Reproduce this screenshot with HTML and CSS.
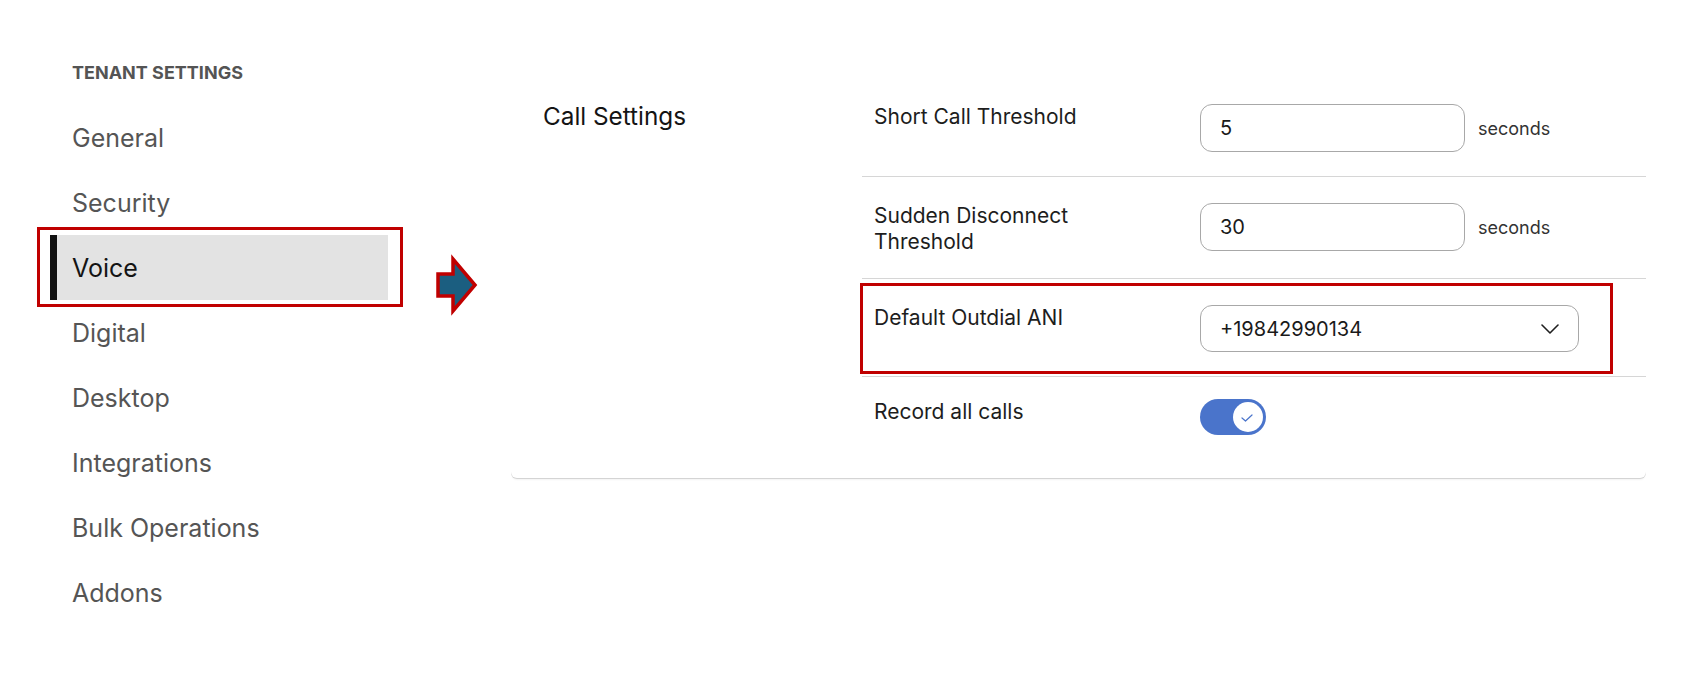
FILE: index.html
```html
<!DOCTYPE html>
<html lang="en">
<head>
<meta charset="utf-8">
<title>Tenant Settings - Voice</title>
<link rel="stylesheet" href="styles.css">
</head>
<body>
<div class="page">
  <nav class="nav">
    <div class="nav-title">TENANT SETTINGS</div>
    <ul class="nav-list">
      <li class="nav-item">General</li>
      <li class="nav-item">Security</li>
      <li class="nav-item is-active">Voice<span class="callout callout-nav"></span></li>
      <li class="nav-item">Digital</li>
      <li class="nav-item">Desktop</li>
      <li class="nav-item">Integrations</li>
      <li class="nav-item">Bulk Operations</li>
      <li class="nav-item">Addons</li>
    </ul>
  </nav>

  <div class="gutter">
    <svg class="pointer-arrow" width="46" height="62" viewBox="0 0 46 62" aria-hidden="true">
      <polygon points="4,20 19,20 19,5 41,31 19,57 19,42 4,42" fill="#1b5e80" stroke="#c00000" stroke-width="3.5" stroke-linejoin="miter"/>
    </svg>
  </div>

  <section class="card">
    <h2 class="card-title">Call Settings</h2>
    <div class="rows">
      <div class="row">
        <div class="row-label">Short Call Threshold</div>
        <div class="row-control">
          <div class="field">5</div>
          <span class="unit">seconds</span>
        </div>
      </div>
      <div class="row">
        <div class="row-label">Sudden Disconnect<br>Threshold</div>
        <div class="row-control">
          <div class="field">30</div>
          <span class="unit">seconds</span>
        </div>
      </div>
      <div class="row">
        <div class="row-label">Default Outdial ANI</div>
        <div class="row-control">
          <div class="field field-select">
            <span>+19842990134</span>
            <svg class="chevron" width="18" height="10" viewBox="0 0 18 10" aria-hidden="true">
              <path d="M1 1 L9 9 L17 1" fill="none" stroke="#1f1f1f" stroke-width="1.6" stroke-linecap="round" stroke-linejoin="round"/>
            </svg>
          </div>
        </div>
        <span class="callout callout-row"></span>
      </div>
      <div class="row row-last">
        <div class="row-label">Record all calls</div>
        <div class="row-control">
          <div class="toggle">
            <span class="toggle-knob">
              <svg width="12" height="8" viewBox="0 0 12 8" aria-hidden="true">
                <path d="M1 4 L4.5 7 L11 1" fill="none" stroke="#4a74cb" stroke-width="1.2" stroke-linecap="round" stroke-linejoin="round"/>
              </svg>
            </span>
          </div>
        </div>
      </div>
    </div>
  </section>
</div>
</body>
</html>
```

FILE: styles.css
```css
* { box-sizing: border-box; }

html, body {
  margin: 0;
  padding: 0;
  background: #ffffff;
}

body {
  font-family: Inter, "Noto Sans", "Liberation Sans", sans-serif;
  color: #1a1a1a;
}

.page {
  display: flex;
  align-items: flex-start;
  padding-left: 50px;
}

/* ---------- Left navigation ---------- */
.nav {
  width: 338px;
  flex: none;
  padding-top: 62px;
}

.nav-title {
  font-size: 18px;
  line-height: 22px;
  font-weight: 700;
  color: #545454;
  padding-left: 22px;
  margin-bottom: 21px;
}

.nav-list {
  list-style: none;
  margin: 0;
  padding: 0;
}

.nav-item {
  position: relative;
  height: 65px;
  display: flex;
  align-items: center;
  padding-left: 22px;
  font-size: 25px;
  color: #555555;
}

.nav-item.is-active {
  background: #e3e3e3;
  box-shadow: inset 7px 0 0 #111111;
  color: #141414;
}

.callout {
  position: absolute;
  border: 3px solid #c00000;
  pointer-events: none;
}

.callout-nav {
  top: -8px;
  left: -13px;
  right: -15px;
  bottom: -7px;
}

/* ---------- Arrow gutter ---------- */
.gutter {
  width: 123px;
  flex: none;
  padding-top: 254px;
  padding-left: 46px;
}

.pointer-arrow {
  display: block;
}

/* ---------- Card ---------- */
.card {
  width: 1135px;
  flex: none;
  margin-top: 78px;
  display: grid;
  grid-template-columns: 351px 1fr;
  background: #ffffff;
  border-radius: 0 0 6px 6px;
  box-shadow: 0 1px 0 #d4d4d4, 0 3px 2px -1px rgba(0, 0, 0, 0.05);
}

.card-title {
  margin: 23px 0 0;
  padding-left: 32px;
  font-size: 24.3px;
  line-height: 30px;
  font-weight: 400;
  color: #141414;
}

.rows {
  display: flex;
  flex-direction: column;
}

.row {
  position: relative;
  display: grid;
  grid-template-columns: 338px 1fr;
  align-items: start;
  padding: 26px 0 24px;
  border-bottom: 1px solid #d6d6d6;
}

.row-last {
  border-bottom: none;
  padding: 22px 0 43px;
}

.row-label {
  padding-left: 12px;
  font-size: 21px;
  line-height: 25.5px;
  color: #1d1d1d;
}

.row-control {
  display: flex;
  align-items: center;
  gap: 13px;
}

.field {
  width: 265px;
  height: 48px;
  display: flex;
  align-items: center;
  padding: 0 19px;
  border: 1px solid #a8a8a8;
  border-radius: 12px;
  font-size: 20px;
  color: #1a1a1a;
  background: #ffffff;
}

.field-select {
  width: 379px;
  height: 47px;
  justify-content: space-between;
  padding-right: 19px;
}

.chevron {
  display: block;
}

.unit {
  font-size: 18px;
  color: #333333;
}

.callout-row {
  top: 4px;
  left: -2px;
  right: 33px;
  bottom: 2px;
}

/* ---------- Toggle ---------- */
.toggle {
  width: 66px;
  height: 36px;
  border-radius: 18px;
  background: #4a74cb;
  padding: 3px;
  display: flex;
  justify-content: flex-end;
}

.toggle-knob {
  width: 30px;
  height: 30px;
  border-radius: 50%;
  background: #ffffff;
  display: flex;
  align-items: center;
  justify-content: center;
}

.toggle-knob svg {
  display: block;
  margin-left: -2px;
  margin-top: 2px;
}
```
